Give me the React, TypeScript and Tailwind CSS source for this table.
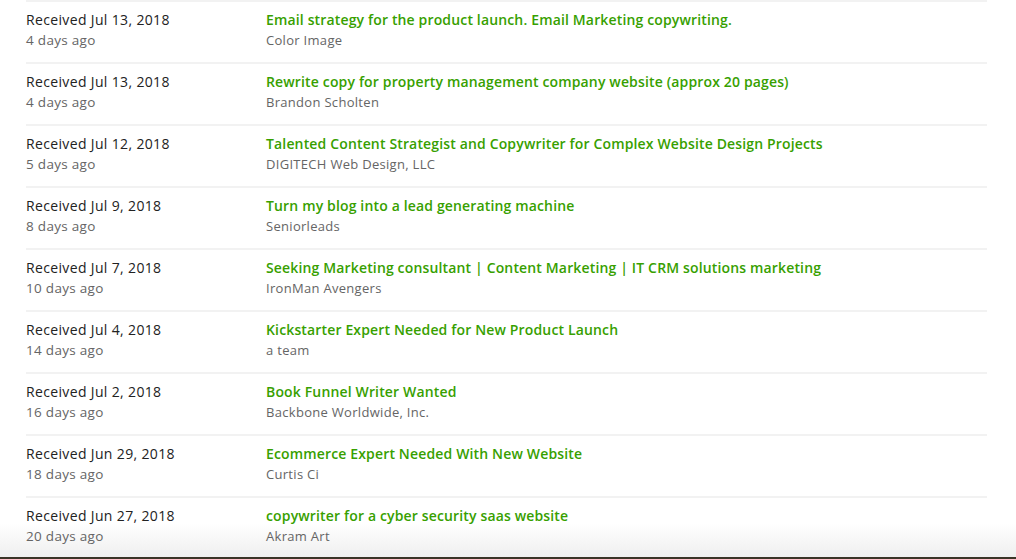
const rows = [
  { date: "Jul 13, 2018", ago: "4 days ago", title: "Email strategy for the product launch. Email Marketing copywriting.", client: "Color Image" },
  { date: "Jul 13, 2018", ago: "4 days ago", title: "Rewrite copy for property management company website (approx 20 pages)", client: "Brandon Scholten" },
  { date: "Jul 12, 2018", ago: "5 days ago", title: "Talented Content Strategist and Copywriter for Complex Website Design Projects", client: "DIGITECH Web Design, LLC" },
  { date: "Jul 9, 2018", ago: "8 days ago", title: "Turn my blog into a lead generating machine", client: "Seniorleads" },
  { date: "Jul 7, 2018", ago: "10 days ago", title: "Seeking Marketing consultant | Content Marketing | IT CRM solutions marketing", client: "IronMan Avengers" },
  { date: "Jul 4, 2018", ago: "14 days ago", title: "Kickstarter Expert Needed for New Product Launch", client: "a team" },
  { date: "Jul 2, 2018", ago: "16 days ago", title: "Book Funnel Writer Wanted", client: "Backbone Worldwide, Inc." },
  { date: "Jun 29, 2018", ago: "18 days ago", title: "Ecommerce Expert Needed With New Website", client: "Curtis Ci" },
  { date: "Jun 27, 2018", ago: "20 days ago", title: "copywriter for a cyber security saas website", client: "Akram Art" },
];

export default function App() {
  return (
    <div className="h-[559px] w-[1016px] overflow-hidden bg-[#3a3427] font-['Open_Sans',sans-serif]">
      <div className="h-[557px] overflow-hidden bg-gradient-to-b from-white from-[94%] to-[#efefef]">
        <div className="ml-[26px] w-[961px] border-t-2 border-[#f2f2f2]">
          {rows.map((r, i) => (
            <div key={i} className="flex border-b-2 border-[#f2f2f2] pt-[8px] pb-[12px]">
              <div className="w-[240px] shrink-0">
                <div className="text-[14px] leading-[20px] tracking-[0.35px] text-[#222]">Received {r.date}</div>
                <div className="text-[13.5px] leading-[20px] tracking-[0.3px] text-[#656565]">{r.ago}</div>
              </div>
              <div>
                <div className="text-[14px] leading-[20px] tracking-[0.15px] font-semibold text-[#37a000]">{r.title}</div>
                <div className="text-[13px] leading-[20px] tracking-[0.3px] text-[#656565]">{r.client}</div>
              </div>
            </div>
          ))}
        </div>
      </div>
    </div>
  );
}
